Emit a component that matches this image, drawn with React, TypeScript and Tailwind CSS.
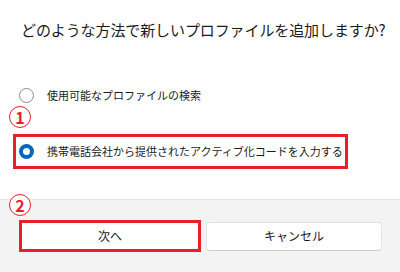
const font = "font-['Noto_Sans_CJK_JP','Noto_Sans',sans-serif]";

function Badge({ n }: { n: string }) {
  return (
    <div className="flex h-[22px] w-[22px] items-center justify-center rounded-full border border-[#e8202a] bg-white text-[16px] font-bold leading-none text-[#e8202a]">
      {n}
    </div>
  );
}

export default function App() {
  return (
    <div className={`relative flex h-[272px] w-[400px] flex-col bg-white text-[#1b1b1b] ${font}`}>
      <div className="flex flex-1 flex-col">
        <h1 className="ml-[21px] mt-[19px] text-[15px] font-normal leading-[22px] tracking-[-0.1px]">
          どのような方法で新しいプロファイルを追加しますか?
        </h1>

        <label className="ml-[19px] mt-[44px] flex h-[20px] items-center">
          <span className="h-[15px] w-[15px] rounded-full border border-[#8a8a8a] bg-white" />
          <span className="ml-[13px] text-[11px] leading-none">使用可能なプロファイルの検索</span>
        </label>

        <div className="ml-[9px] mt-[1px]">
          <Badge n="1" />
        </div>

        <div className="ml-[13px] mt-[6px] flex h-[35px] w-[335px] items-center border-[3px] border-[#e8202a] pl-[3px]">
          <span className="flex h-[15px] w-[15px] items-center justify-center rounded-full bg-[#0067c0]">
            <span className="h-[7px] w-[7px] rounded-full bg-white" />
          </span>
          <span className="ml-[13px] text-[11px] leading-none">
            携帯電話会社から提供されたアクティブ化コードを入力する
          </span>
        </div>
      </div>

      <div className="relative h-[73px] border-t border-[#e5e5e5] bg-[#f3f3f3]">
        <div className="absolute left-[9px] top-[-6px]">
          <Badge n="2" />
        </div>
        <div className="ml-[19px] mt-[20px] flex items-center gap-[5px]">
          <button className="flex h-[32px] w-[182px] items-center justify-center border-[3px] border-[#e8202a] bg-white text-[12px] leading-none">
            次へ
          </button>
          <button className="flex h-[29px] w-[176px] items-center justify-center rounded-[4px] border border-[#e3e3e3] border-b-[#cfcfcf] bg-white text-[12px] leading-none">
            キャンセル
          </button>
        </div>
      </div>
    </div>
  );
}
